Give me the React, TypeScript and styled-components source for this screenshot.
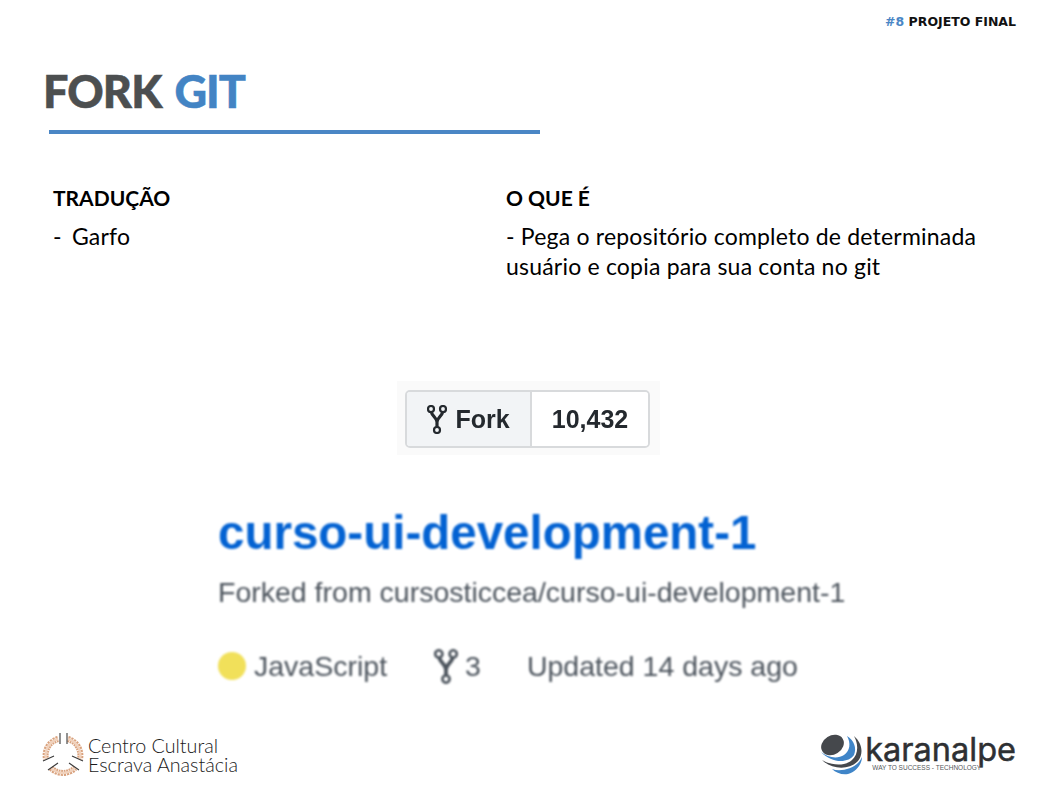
import React from "react";
import styled, { createGlobalStyle } from "styled-components";

const Global = createGlobalStyle`
  html, body { margin: 0; padding: 0; background: #fff; }
  #root { width: 1058px; height: 794px; overflow: hidden; }
`;

const Slide = styled.div`
  width: 1058px;
  height: 794px;
  box-sizing: border-box;
  display: flex;
  flex-direction: column;
  padding: 15px 42px 0 44px;
  font-family: "Lato", "Liberation Sans", sans-serif;
  color: #000;
`;

const Tag = styled.div`
  align-self: flex-end;
  font-family: "DejaVu Sans", sans-serif;
  font-weight: 700;
  font-size: 12.5px;
  line-height: 14px;
  color: #111;
  span { color: #4a86c5; }
`;

const Title = styled.h1`
  margin: 34px 0 0 -1px;
  font-family: "Lato", sans-serif;
  font-weight: 900;
  font-size: 45px;
  line-height: 56px;
  letter-spacing: -0.9px;
  word-spacing: 3px;
  color: #4c4f50;
  -webkit-text-stroke: 0.5px currentColor;
  span { color: #4384c4; }
`;

const Rule = styled.div`
  margin: 11px 0 0 5px;
  width: 491px;
  height: 4px;
  background: #4a86c5;
`;

const Columns = styled.div`
  display: grid;
  grid-template-columns: 453px 480px;
  margin: 49px 0 0 9px;
`;

const Column = styled.div`
  display: flex;
  flex-direction: column;
`;

const Heading = styled.div`
  font-weight: 700;
  font-size: 21px;
  line-height: 30px;
`;

const Body = styled.div<{ $tight?: boolean }>`
  margin-top: 8px;
  font-family: "Lato", sans-serif;
  font-size: 23px;
  line-height: 30px;
  letter-spacing: 0.2px;
  word-spacing: ${(p) => (p.$tight ? "-1px" : "0")};
  white-space: pre;
`;

const ForkStrip = styled.div`
  align-self: flex-start;
  margin: 100px 0 0 353px;
  padding: 9px 10px 7px 8px;
  background: #fafafa;
`;

const ForkGroup = styled.div`
  display: flex;
  width: 245px;
  height: 58px;
  box-sizing: border-box;
  border: 2px solid #d8dadc;
  border-radius: 5px;
  overflow: hidden;
  font-family: "Liberation Sans", sans-serif;
  font-weight: 700;
  font-size: 25px;
  color: #24292e;
  filter: blur(0.7px);
`;

const ForkButton = styled.div`
  width: 123px;
  display: flex;
  align-items: center;
  justify-content: center;
  gap: 8px;
  background: #f2f4f6;
  border-right: 2px solid #d8dadc;
`;

const ForkCount = styled.div`
  flex: 1;
  display: flex;
  align-items: center;
  justify-content: center;
  background: #fff;
`;

const Repo = styled.div`
  margin: 48px 0 0 174px;
  display: flex;
  flex-direction: column;
  font-family: "Liberation Sans", sans-serif;
  filter: blur(0.8px);
`;

const RepoName = styled.div`
  font-weight: 700;
  font-size: 47.5px;
  line-height: 60px;
  color: #0362d2;
`;

const RepoFork = styled.div`
  margin-top: 11px;
  font-size: 28.5px;
  line-height: 36px;
  color: #4c545d;
`;

const Meta = styled.div`
  margin-top: 38px;
  display: flex;
  align-items: center;
  font-size: 28.5px;
  line-height: 36px;
  color: #4c545d;
`;

const LangDot = styled.span`
  width: 28px;
  height: 28px;
  border-radius: 50%;
  background: #f1e05a;
  margin-right: 8px;
`;

const MetaFork = styled.span`
  display: flex;
  align-items: center;
  gap: 7px;
  margin: 0 46px 0 47px;
`;

const Footer = styled.div`
  margin-top: auto;
  margin-bottom: 16px;
  display: flex;
  justify-content: space-between;
  align-items: center;
`;

const CentroLogo = styled.div`
  display: flex;
  align-items: center;
  margin-left: -6px;
`;

const CentroText = styled.div`
  font-family: "Lato", sans-serif;
  font-weight: 300;
  font-size: 19.7px;
  line-height: 19px;
  color: #1a1a1a;
  margin-top: 3px;
  white-space: nowrap;
`;

const KaranalpeLogo = styled.div`
  align-self: flex-end;
  display: flex;
  align-items: flex-start;
  gap: 1px;
`;

const KaranalpeText = styled.div`
  display: flex;
  flex-direction: column;
  color: #2e3033;
`;

const KaranalpeName = styled.div`
  font-family: "Inter", sans-serif;
  font-weight: 400;
  font-size: 32.5px;
  line-height: 36px;
  -webkit-text-stroke: 0.5px #2e3033;
`;

const KaranalpeSlogan = styled.div`
  margin: -4px 0 0 7px;
  font-family: "Liberation Sans", sans-serif;
  font-size: 6.5px;
  line-height: 7px;
  color: #55585b;
`;

const ForkIcon = ({ w, h, color }: { w: number; h: number; color: string }) => (
  <svg width={w} height={h} viewBox="0 0 20 29" fill="none" stroke={color} strokeWidth="2.2">
    <circle cx="4" cy="4" r="3" />
    <circle cx="16" cy="4" r="3" />
    <circle cx="10" cy="25" r="3" />
    <path d="M4.3 7C5 11 10 13 10 17V22M15.7 7C15 11 10 13 10 17" strokeWidth="3.2" />
  </svg>
);

const CentroMark = () => (
  <svg width="50" height="50" viewBox="0 0 50 50" fill="none">
    <g stroke="#d9a27e" strokeWidth="6" strokeDasharray="2 0.8">
      <path d="M20 11A17 17 0 0 0 8 31" />
      <path d="M30 11A17 17 0 0 1 42 31" />
      <path d="M13 40A17 17 0 0 0 37 40" />
    </g>
    <g stroke="#f0d2bd" strokeWidth="2.4">
      <path d="M20 11A17 17 0 0 0 8 31" />
      <path d="M30 11A17 17 0 0 1 42 31" />
      <path d="M13 40A17 17 0 0 0 37 40" />
    </g>
    <g stroke="#3a3a3a" strokeWidth="1.1">
      <path d="M22 5V16M29 5V16M5 33L16 28M45 33L34 28M10 42L20 35M41 42L31 35" />
    </g>
  </svg>
);

const GlobeMark = () => (
  <svg width="44" height="46" viewBox="0 0 44 46">
    <ellipse cx="12.5" cy="13" rx="12" ry="9.5" transform="rotate(-32 12.5 13)" fill="#45484c" />
    <path d="M1 20C8 26 18 27 24 23C30 19 31 11 27 4C34 8 37 16 34 23C29 31 12 32 1 20Z" fill="#3f85c8" />
    <path d="M2 28C10 33 24 35 32 28C38 23 39 13 34 4C42 11 44 21 38 29C30 38 12 38 2 28Z" fill="#45484c" />
    <path d="M12 37C20 40 32 37 38 31C40 29 41 27 42 25C42 32 36 40 28 42C22 43 16 41 12 37Z" fill="#3f85c8" />
  </svg>
);

export default function App() {
  return (
    <Slide>
      <Global />
      <Tag><span>#8</span> PROJETO FINAL</Tag>
      <Title>FORK <span>GIT</span></Title>
      <Rule />
      <Columns>
        <Column>
          <Heading>TRADUÇÃO</Heading>
          <Body $tight>-  Garfo</Body>
        </Column>
        <Column>
          <Heading>O QUE É</Heading>
          <Body>{"- Pega o repositório completo de determinada\nusuário e copia para sua conta no git"}</Body>
        </Column>
      </Columns>
      <ForkStrip>
        <ForkGroup>
          <ForkButton><ForkIcon w={20} h={29} color="#24292e" />Fork</ForkButton>
          <ForkCount>10,432</ForkCount>
        </ForkGroup>
      </ForkStrip>
      <Repo>
        <RepoName>curso-ui-development-1</RepoName>
        <RepoFork>Forked from cursosticcea/curso-ui-development-1</RepoFork>
        <Meta>
          <LangDot />
          JavaScript
          <MetaFork><ForkIcon w={24} h={35} color="#4c545d" />3</MetaFork>
          Updated 14 days ago
        </Meta>
      </Repo>
      <Footer>
        <CentroLogo>
          <CentroMark />
          <CentroText>Centro Cultural<br />Escrava Anastácia</CentroText>
        </CentroLogo>
        <KaranalpeLogo>
          <GlobeMark />
          <KaranalpeText>
            <KaranalpeName>karanalpe</KaranalpeName>
            <KaranalpeSlogan>WAY TO SUCCESS - TECHNOLOGY</KaranalpeSlogan>
          </KaranalpeText>
        </KaranalpeLogo>
      </Footer>
    </Slide>
  );
}
